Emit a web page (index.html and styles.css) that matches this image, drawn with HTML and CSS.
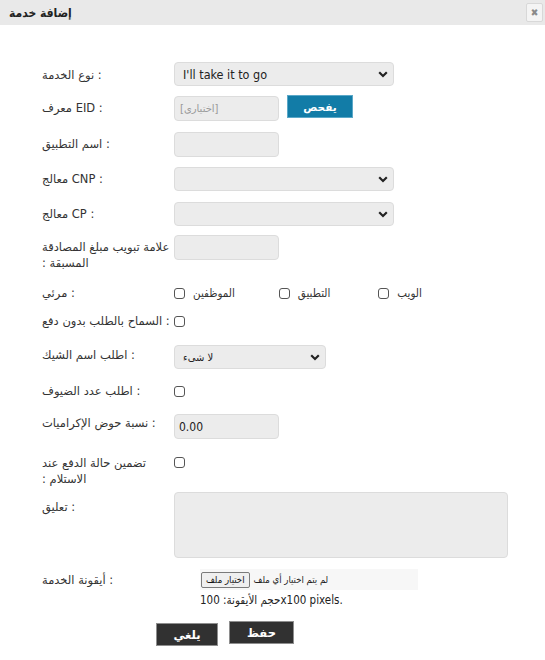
FILE: index.html
```html
<!DOCTYPE html>
<html lang="ar">
<head>
<meta charset="utf-8">
<title>إضافة خدمة</title>
<link rel="stylesheet" href="styles.css">
</head>
<body>
<div class="dialog">
  <div class="titlebar">
    <span class="title">إضافة خدمة</span>
    <span class="close">✖</span>
  </div>
  <form class="form">
    <div class="row r1">
      <label class="lbl pad5">نوع الخدمة :</label>
      <div class="ctl">
        <div class="selwrap wide">
          <select class="sel"><option>I'll take it to go</option></select>
          <svg class="chev" width="10" height="7" viewBox="0 0 10 7"><path d="M1.2 1.3 L5 5 L8.8 1.3" fill="none" stroke="#222" stroke-width="2.2"/></svg>
        </div>
      </div>
    </div>
    <div class="row r2">
      <label class="lbl pad4">معرف EID :</label>
      <div class="ctl">
        <input class="inp" type="text" placeholder="[اختياري]">
        <button type="button" class="btn-blue">يفحص</button>
      </div>
    </div>
    <div class="row r3">
      <label class="lbl pad4">اسم التطبيق :</label>
      <div class="ctl"><input class="inp" type="text"></div>
    </div>
    <div class="row r4">
      <label class="lbl pad4">معالج CNP :</label>
      <div class="ctl">
        <div class="selwrap wide">
          <select class="sel"><option></option></select>
          <svg class="chev" width="10" height="7" viewBox="0 0 10 7"><path d="M1.2 1.3 L5 5 L8.8 1.3" fill="none" stroke="#222" stroke-width="2.2"/></svg>
        </div>
      </div>
    </div>
    <div class="row r5">
      <label class="lbl pad4">معالج CP :</label>
      <div class="ctl">
        <div class="selwrap wide">
          <select class="sel"><option></option></select>
          <svg class="chev" width="10" height="7" viewBox="0 0 10 7"><path d="M1.2 1.3 L5 5 L8.8 1.3" fill="none" stroke="#222" stroke-width="2.2"/></svg>
        </div>
      </div>
    </div>
    <div class="row r6">
      <label class="lbl pad4"><span class="line">علامة تبويب مبلغ المصادقة</span><span class="line">: المسبقة</span></label>
      <div class="ctl"><input class="inp" type="text"></div>
    </div>
    <div class="row r7 chkrow">
      <label class="lbl">مرئي :</label>
      <div class="ctl checks">
        <span class="chkitem"><span class="chk"></span><span class="chktxt">الموظفين</span></span>
        <span class="chkitem it2"><span class="chk"></span><span class="chktxt">التطبيق</span></span>
        <span class="chkitem it3"><span class="chk"></span><span class="chktxt">الويب</span></span>
      </div>
    </div>
    <div class="row r8 chkrow">
      <label class="lbl">السماح بالطلب بدون دفع :</label>
      <div class="ctl"><span class="chk"></span></div>
    </div>
    <div class="row r9">
      <label class="lbl pad2">اطلب اسم الشيك :</label>
      <div class="ctl">
        <div class="selwrap mid">
          <select class="sel small"><option>لا شيء</option></select>
          <svg class="chev" width="10" height="7" viewBox="0 0 10 7"><path d="M1.2 1.3 L5 5 L8.8 1.3" fill="none" stroke="#222" stroke-width="2.2"/></svg>
        </div>
      </div>
    </div>
    <div class="row r10 chkrow">
      <label class="lbl">اطلب عدد الضيوف :</label>
      <div class="ctl"><span class="chk"></span></div>
    </div>
    <div class="row r11">
      <label class="lbl pad1">نسبة حوض الإكراميات :</label>
      <div class="ctl"><input class="inp val" type="text" value="0.00"></div>
    </div>
    <div class="row r12">
      <label class="lbl"><span class="line">تضمين حالة الدفع عند</span><span class="line">: الاستلام</span></label>
      <div class="ctl"><span class="chk chk-top"></span></div>
    </div>
    <div class="row r13">
      <label class="lbl pad7">تعليق :</label>
      <div class="ctl"><textarea class="txa"></textarea></div>
    </div>
    <div class="row r14">
      <label class="lbl pad3">أيقونة الخدمة :</label>
      <div class="ctl filecol">
        <div class="filebox"><span class="filebtn">اختيار ملف</span><span class="filetxt">لم يتم اختيار أي ملف</span></div>
        <div class="note">حجم الأيقونة: 100x100 pixels.</div>
      </div>
    </div>
    <div class="actions">
      <button type="button" class="btn-dark cancel">يلغي</button>
      <button type="button" class="btn-dark save">حفظ</button>
    </div>
  </form>
</div>
</body>
</html>
```
FILE: styles.css
```css
* { box-sizing: border-box; }
html, body { margin: 0; padding: 0; background: #fff; }
body {
  font-family: Tahoma, "DejaVu Sans Condensed", "DejaVu Sans", sans-serif;
  color: #333;
  font-size: 12px;
}
.titlebar {
  height: 25px;
  background: #e9e9e9;
  display: flex;
  align-items: center;
  justify-content: space-between;
  padding: 0 2px 0 9px;
}
.title {
  font-size: 12px;
  font-weight: bold;
  color: #222;
}
.close {
  width: 17px;
  height: 19px;
  border: 1px solid #d8d8d8;
  background: #f4f4f4;
  border-radius: 2px;
  color: #8a8a8a;
  font-size: 10px;
  display: flex;
  align-items: center;
  justify-content: center;
}
.form {
  padding-left: 42px;
  padding-top: 37px;
}
.row {
  display: flex;
  align-items: flex-start;
}
.lbl {
  width: 132px;
  flex: none;
  line-height: 16px;
  font-size: 11.5px;
  color: #333;
  font-family: Tahoma, "DejaVu Sans", sans-serif;
}
.line { display: block; }
.pad1 { padding-top: 1px; }
.pad2 { padding-top: 2px; }
.pad3 { padding-top: 3px; }
.pad4 { padding-top: 4px; }
.pad5 { padding-top: 5px; }
.pad7 { padding-top: 7px; }
.ctl { display: flex; align-items: flex-start; }

.r2 { margin-top: 10px; }
.r3 { margin-top: 11px; }
.r4 { margin-top: 10px; }
.r5 { margin-top: 11px; }
.r6 { margin-top: 9px; }
.r7 { margin-top: 13px; }
.r8 { margin-top: 10px; }
.r9 { margin-top: 15px; }
.r10 { margin-top: 13px; }
.r11 { margin-top: 14px; }
.r12 { margin-top: 16px; }
.r13 { margin-top: 5px; }
.r14 { margin-top: 11px; }

.selwrap { position: relative; }
.selwrap.wide { width: 220px; }
.selwrap.mid { width: 152px; }
.sel {
  appearance: none;
  -webkit-appearance: none;
  width: 100%;
  height: 24px;
  background: #ececec;
  border: 1px solid #dcdcdc;
  border-radius: 4px;
  padding: 0 20px 0 8px;
  font-family: Tahoma, "DejaVu Sans Condensed", "DejaVu Sans", sans-serif;
  font-size: 12.5px;
  color: #222;
  outline: none;
}
.sel.small { font-size: 10px; font-family: Tahoma, "DejaVu Sans", sans-serif; }
.chev {
  position: absolute;
  right: 6px;
  top: 9px;
  pointer-events: none;
}
.inp {
  width: 105px;
  height: 25px;
  background: #ececec;
  border: 1px solid #dcdcdc;
  border-radius: 4px;
  padding: 0 5px;
  font-family: Tahoma, "DejaVu Sans", sans-serif;
  font-size: 10px;
  color: #222;
  outline: none;
}
.inp::placeholder { color: #999; }
.inp.val {
  font-size: 12px;
  padding-left: 4px;
  font-family: Tahoma, "DejaVu Sans Condensed", "DejaVu Sans", sans-serif;
}
.btn-blue {
  margin-left: 8px;
  margin-top: -1px;
  width: 66px;
  height: 23px;
  background: #127ca7;
  border: 1px solid #5ba8c8;
  color: #fff;
  font-family: Tahoma, "DejaVu Sans", sans-serif;
  font-size: 10.5px;
  font-weight: bold;
  padding: 0;
}
.chkrow .lbl { line-height: 18px; }
.chkrow .ctl { height: 18px; align-items: center; }
.chk {
  display: inline-block;
  width: 11px;
  height: 11px;
  border: 1px solid #555;
  border-radius: 3px;
  background: #fff;
  flex: none;
}
.chk-top { margin-top: 2px; }
.checks { align-items: center; }
.chkitem { display: flex; align-items: center; }
.chktxt { margin-left: 8px; font-size: 11.5px; }
.chkitem.it2 { margin-left: 44px; }
.chkitem.it3 { margin-left: 48px; }
.txa {
  width: 334px;
  height: 66px;
  background: #ececec;
  border: 1px solid #dcdcdc;
  border-radius: 4px;
  resize: none;
  outline: none;
}
.filecol {
  flex-direction: column;
  padding-left: 26px;
}
.filebox {
  width: 218px;
  height: 21px;
  background: #f7f7f7;
  display: flex;
  align-items: center;
  padding-left: 1px;
}
.filebtn {
  height: 16px;
  padding: 0 4px;
  border: 1px solid #7a7a7a;
  border-radius: 2px;
  background: #efefef;
  font-size: 9.5px;
  line-height: 14px;
  color: #111;
}
.filetxt {
  margin-left: 4px;
  font-size: 9.5px;
  color: #222;
}
.note {
  margin-top: 2px;
  font-size: 11.5px;
  line-height: 16px;
  color: #222;
  font-family: Tahoma, "DejaVu Sans Condensed", "DejaVu Sans", sans-serif;
}
.actions {
  display: flex;
  align-items: flex-start;
  padding-left: 114px;
  margin-top: 13px;
}
.btn-dark {
  height: 23px;
  background: #313131;
  border: 1px solid #8e8e8e;
  color: #fff;
  font-family: Tahoma, "DejaVu Sans", sans-serif;
  font-weight: bold;
  font-size: 11.5px;
  padding: 0;
}
.cancel { width: 62px; margin-top: 2px; }
.save { width: 65px; margin-left: 11px; }
```
